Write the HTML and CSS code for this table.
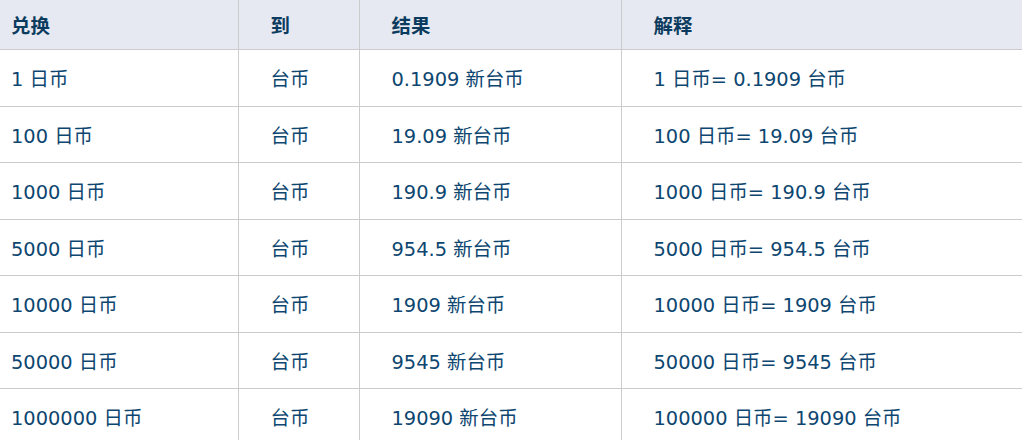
FILE: index.html
```html
<!DOCTYPE html>
<html lang="zh">
<head>
<meta charset="utf-8">
<link rel="stylesheet" href="styles.css">
</head>
<body>
<table class="rates">
  <colgroup>
    <col class="c1"><col class="c2"><col class="c3"><col class="c4">
  </colgroup>
  <thead>
    <tr><th class="first">兑换</th><th>到</th><th>结果</th><th>解释</th></tr>
  </thead>
  <tbody>
    <tr><td class="first">1 日币</td><td>台币</td><td>0.1909 新台币</td><td>1 日币= 0.1909 台币</td></tr>
    <tr><td class="first">100 日币</td><td>台币</td><td>19.09 新台币</td><td>100 日币= 19.09 台币</td></tr>
    <tr><td class="first">1000 日币</td><td>台币</td><td>190.9 新台币</td><td>1000 日币= 190.9 台币</td></tr>
    <tr><td class="first">5000 日币</td><td>台币</td><td>954.5 新台币</td><td>5000 日币= 954.5 台币</td></tr>
    <tr><td class="first">10000 日币</td><td>台币</td><td>1909 新台币</td><td>10000 日币= 1909 台币</td></tr>
    <tr><td class="first">50000 日币</td><td>台币</td><td>9545 新台币</td><td>50000 日币= 9545 台币</td></tr>
    <tr><td class="first">1000000 日币</td><td>台币</td><td>19090 新台币</td><td>100000 日币= 19090 台币</td></tr>
  </tbody>
</table>
</body>
</html>
```
FILE: styles.css
```css
html, body {
  margin: 0;
  padding: 0;
  background: #ffffff;
}
.rates {
  width: 1022px;
  border-collapse: collapse;
  table-layout: fixed;
  font-family: "DejaVu Sans", Verdana, "Noto Sans CJK SC", sans-serif;
  font-size: 19.4px;
  color: #0d4670;
}
.c1 { width: 238px; }
.c2 { width: 121px; }
.c3 { width: 262px; }
.c4 { width: 401px; }
.rates th, .rates td {
  text-align: left;
  padding: 0 0 0 32px;
  border-left: 1px solid #cccccc;
  border-bottom: 1px solid #cccccc;
  white-space: nowrap;
  vertical-align: middle;
}
.rates th {
  height: 49px;
  background: #e6e9f1;
  font-weight: bold;
  color: #0b3b5e;
}
.rates td {
  height: 55.5px;
}
.rates .first {
  padding-left: 11px;
  border-left: none;
}
```
